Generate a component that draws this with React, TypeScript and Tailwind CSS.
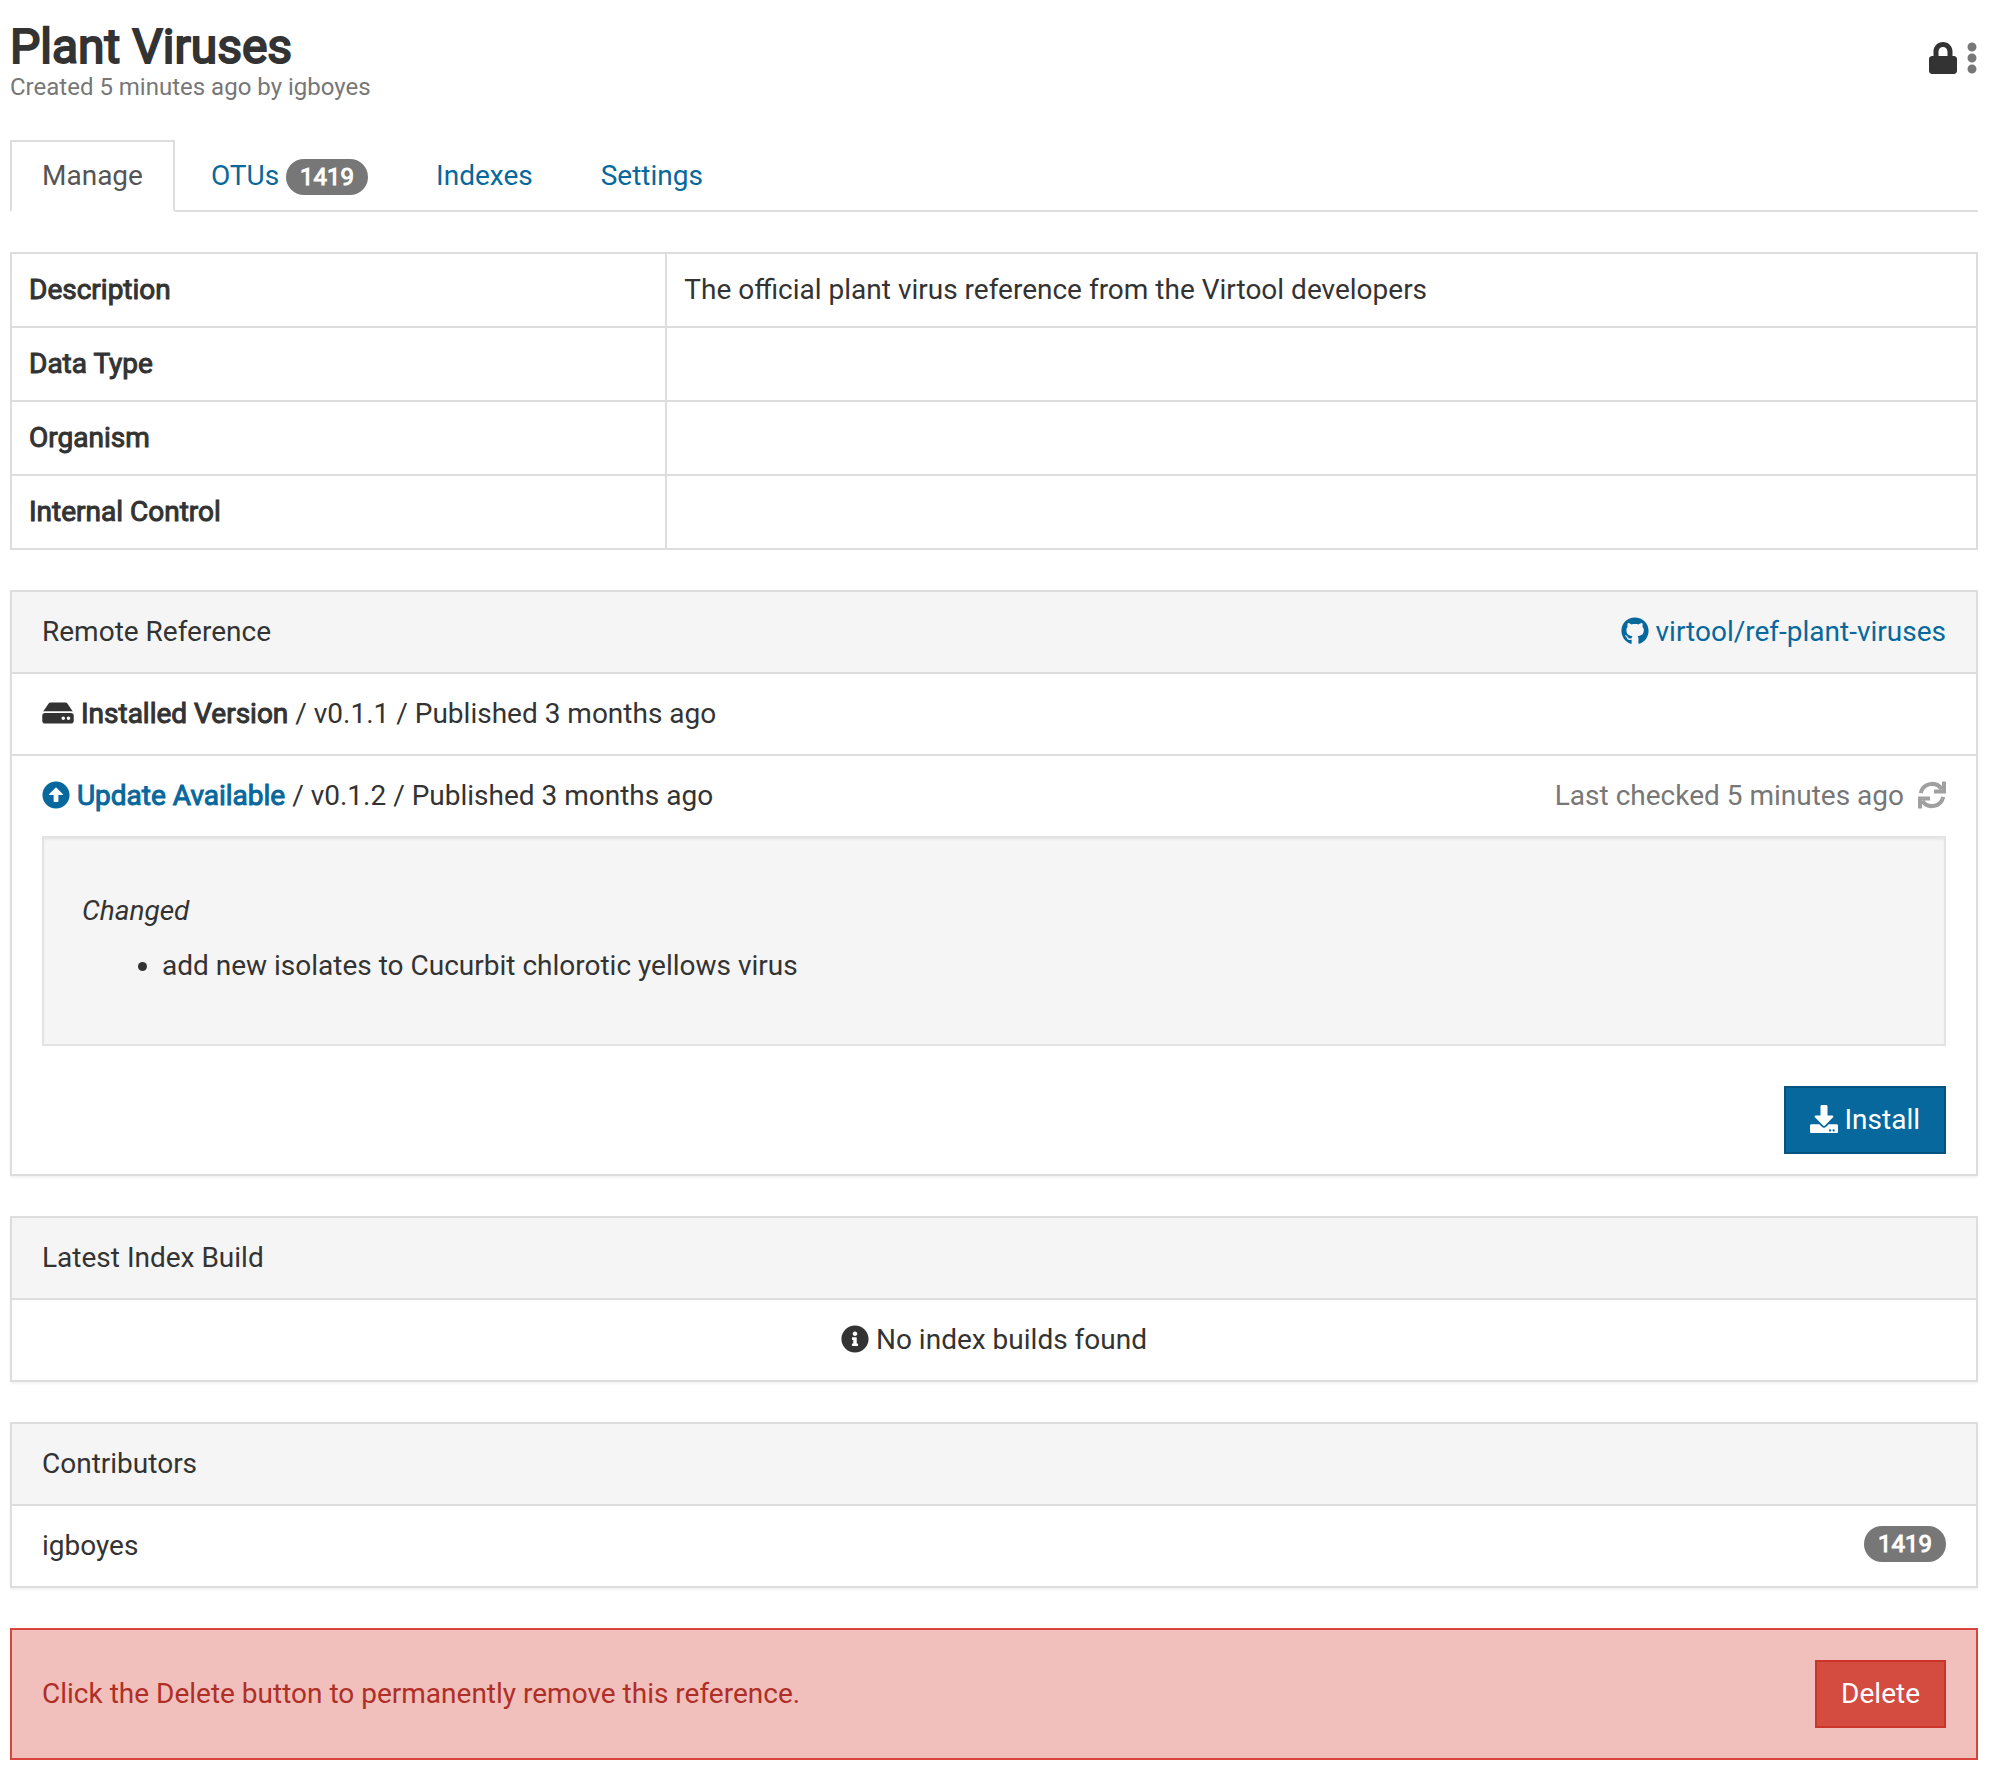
import type { ReactNode } from "react";
import {
  FaArrowAltCircleUp,
  FaDownload,
  FaEllipsisV,
  FaGithub,
  FaHdd,
  FaInfoCircle,
  FaLock,
} from "react-icons/fa";

const details = [
  { label: "Description", value: "The official plant virus reference from the Virtool developers" },
  { label: "Data Type", value: "" },
  { label: "Organism", value: "" },
  { label: "Internal Control", value: "" },
];

const iconClass = "inline-block size-[28px] align-[-4px]";

function Strong({ children }: { children: ReactNode }) {
  return <strong className="font-normal [-webkit-text-stroke:1px_currentColor]">{children}</strong>;
}

function Badge({ children }: { children: ReactNode }) {
  return (
    <span className="inline-block rounded-[20px] bg-[#777] px-[14px] text-[24px] leading-[36px] text-white">
      <Strong>{children}</Strong>
    </span>
  );
}

function Tab({ active, children }: { active?: boolean; children: ReactNode }) {
  return (
    <a
      href="#"
      className={
        active
          ? "-mb-[2px] border-2 border-[#ddd] border-b-white bg-white px-[30px] py-[14px] text-[#555]"
          : "-mb-[2px] border-2 border-transparent px-[30px] py-[14px] text-[#07689d]"
      }
    >
      {children}
    </a>
  );
}

function Panel({ title, action, children }: { title: string; action?: ReactNode; children: ReactNode }) {
  return (
    <section className="mt-[40px] divide-y-2 divide-[#ddd] border-2 border-[#ddd] shadow-[0_2px_2px_rgba(0,0,0,0.05)]">
      <header className="flex justify-between bg-[#f5f5f5] px-[30px] py-[20px]">
        <h2>{title}</h2>
        {action}
      </header>
      {children}
    </section>
  );
}

function RefreshIcon() {
  return (
    <svg viewBox="0 0 28 28" className={iconClass} fill="none" stroke="currentColor" strokeWidth="4" aria-hidden="true">
      <path d="M2.8 12.2A11.4 11.4 0 0 1 23.6 8.2" />
      <path d="M16 10.4H26V0.4" />
      <path d="M25.2 15.8A11.4 11.4 0 0 1 4.4 19.8" />
      <path d="M12 17.6H2V27.6" />
    </svg>
  );
}

export default function App() {
  return (
    <main className="bg-white pt-[23px] pr-3 pb-[22px] pl-[10px] font-[Roboto,sans-serif] text-[28px] leading-[40px] text-[#333]">
      <div className="flex items-start justify-between">
        <div>
          <h1 className="text-[48px] leading-[48px] [-webkit-text-stroke:2px_currentColor]">Plant Viruses</h1>
          <p className="text-[24px] leading-[32px] text-[#777]">Created 5 minutes ago by igboyes</p>
        </div>
        <div className="mt-[19px] flex gap-[9px]">
          <FaLock className="h-[32px] w-[28px]" />
          <button type="button" aria-label="More options" className="text-[#777]">
            <FaEllipsisV className="h-[32px] w-[12px]" />
          </button>
        </div>
      </div>

      <nav className="mt-[37px] flex gap-1 border-b-2 border-[#ddd]">
        <Tab active>Manage</Tab>
        <Tab>
          OTUs <Badge>1419</Badge>
        </Tab>
        <Tab>Indexes</Tab>
        <Tab>Settings</Tab>
      </nav>

      <table className="mt-[40px] w-full border-collapse">
        <tbody>
          {details.map((row) => (
            <tr key={row.label}>
              <th scope="row" className="w-1/3 border-2 border-[#ddd] px-[17px] py-4 text-left font-normal">
                <Strong>{row.label}</Strong>
              </th>
              <td className="border-2 border-[#ddd] px-[17px] py-4">{row.value}</td>
            </tr>
          ))}
        </tbody>
      </table>

      <Panel
        title="Remote Reference"
        action={
          <a href="#" className="text-[#07689d]">
            <FaGithub className={iconClass} /> virtool/ref-plant-viruses
          </a>
        }
      >
        <div className="px-[30px] py-[20px]">
          <FaHdd className="inline-block h-[28px] w-[32px] align-[-4px]" /> <Strong>Installed Version</Strong> / v0.1.1 /
          Published 3 months ago
        </div>
        <div className="px-[30px] py-[20px]">
          <div className="flex justify-between">
            <div>
              <span className="text-[#07689d]">
                <FaArrowAltCircleUp className={iconClass} /> <Strong>Update Available</Strong>
              </span>{" "}
              / v0.1.2 / Published 3 months ago
            </div>
            <div className="flex gap-[14px] text-[#777]">
              Last checked 5 minutes ago
              <button type="button" aria-label="Check for updates" className="text-[#a0a0a0]">
                <RefreshIcon />
              </button>
            </div>
          </div>
          <div className="mt-[20px] border-2 border-[#e3e3e3] bg-[#f5f5f5] px-[38px] pt-[53px] pb-[58px] shadow-[inset_0_2px_2px_rgba(0,0,0,0.05)]">
            <h3 className="italic">Changed</h3>
            <ul className="mt-[15px] list-disc pl-20">
              <li>add new isolates to Cucurbit chlorotic yellows virus</li>
            </ul>
          </div>
          <div className="mt-[40px] flex justify-end">
            <button type="button" className="border-2 border-[#04537e] bg-[#07689d] px-6 py-3 text-white">
              <FaDownload className={iconClass} /> Install
            </button>
          </div>
        </div>
      </Panel>

      <Panel title="Latest Index Build">
        <p className="px-[30px] py-[20px] text-center">
          <FaInfoCircle className={iconClass} /> No index builds found
        </p>
      </Panel>

      <Panel title="Contributors">
        <div className="flex items-start justify-between px-[30px] py-[20px]">
          <span>igboyes</span>
          <Badge>1419</Badge>
        </div>
      </Panel>

      <div className="mt-[40px] flex items-center justify-between border-2 border-[#d9453d] bg-[#f1c0bc] p-[30px] text-[#af2f27]">
        <span>Click the Delete button to permanently remove this reference.</span>
        <button type="button" className="border-2 border-[#cb3529] bg-[#d44b40] px-6 py-3 text-white">
          Delete
        </button>
      </div>
    </main>
  );
}
